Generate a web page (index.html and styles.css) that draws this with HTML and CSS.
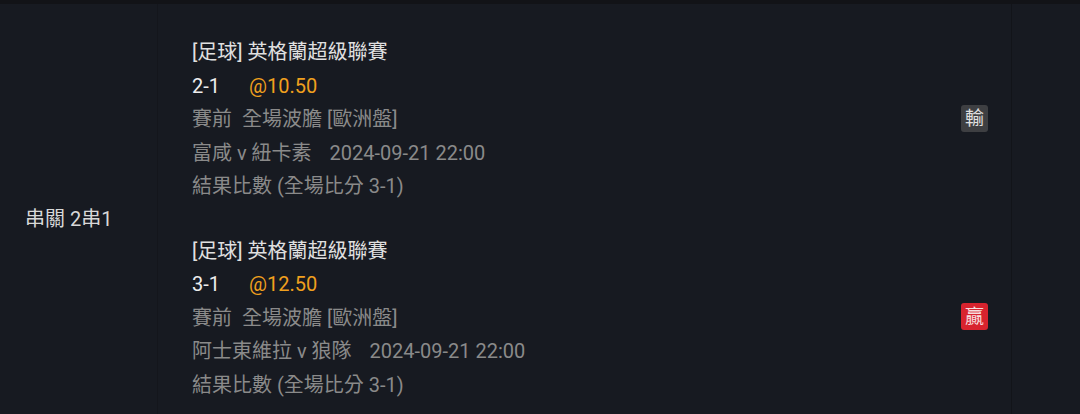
FILE: index.html
```html
<!DOCTYPE html>
<html lang="zh-Hant">
<head>
<meta charset="utf-8">
<link rel="stylesheet" href="styles.css">
</head>
<body>
<div class="topbar"></div>
<div class="row">
  <div class="type">串關 2串1</div>
  <div class="legs">
    <div class="leg">
      <div class="line title">[足球] 英格蘭超級聯賽</div>
      <div class="line pick"><span class="score">2-1</span><span class="odds">@10.50</span></div>
      <div class="line muted split"><span>賽前&nbsp; 全場波膽 [歐洲盤]</span><span class="badge lose">輸</span></div>
      <div class="line muted"><span>富咸 v 紐卡素</span><span class="date">2024-09-21 22:00</span></div>
      <div class="line muted">結果比數 (全場比分 3-1)</div>
    </div>
    <div class="leg">
      <div class="line title">[足球] 英格蘭超級聯賽</div>
      <div class="line pick"><span class="score">3-1</span><span class="odds">@12.50</span></div>
      <div class="line muted split"><span>賽前&nbsp; 全場波膽 [歐洲盤]</span><span class="badge win">贏</span></div>
      <div class="line muted"><span>阿士東維拉 v 狼隊</span><span class="date">2024-09-21 22:00</span></div>
      <div class="line muted">結果比數 (全場比分 3-1)</div>
    </div>
  </div>
  <div class="tail"></div>
</div>
</body>
</html>
```

FILE: styles.css
```css
html, body {
  margin: 0;
  padding: 0;
  background: #171a21;
  width: 1080px;
  height: 414px;
  overflow: hidden;
  font-family: Roboto, "Noto Sans CJK TC", sans-serif;
  font-size: 20px;
}
.topbar {
  height: 4px;
  background: #121317;
}
.row {
  display: grid;
  grid-template-columns: 158px 854px 1fr;
  height: 410px;
}
.type {
  display: flex;
  align-items: center;
  padding-left: 25px;
  padding-top: 16px;
  color: #d8d8d8;
  border-right: 1px solid #14161c;
}
.legs {
  padding: 32px 23px 0 34px;
  display: flex;
  flex-direction: column;
  gap: 31px;
  border-right: 1px solid #121419;
}
.line {
  height: 33.5px;
  line-height: 33.5px;
  display: flex;
  align-items: center;
  white-space: nowrap;
}
.title { color: #e0e0e0; }
.pick { color: #ededed; }
.score { width: 57px; }
.odds { color: #f0a01e; }
.muted { color: #8a8a8a; }
.split { justify-content: space-between; }
.date { margin-left: 18px; }
.badge {
  width: 27px;
  height: 27px;
  margin-top: -3px;
  border-radius: 3px;
  display: flex;
  align-items: center;
  justify-content: center;
  font-size: 19px;
  line-height: 1;
}
.lose { background: #3e3f42; color: #e0e0e0; }
.win { background: #d8232e; color: #f6dede; }
```
